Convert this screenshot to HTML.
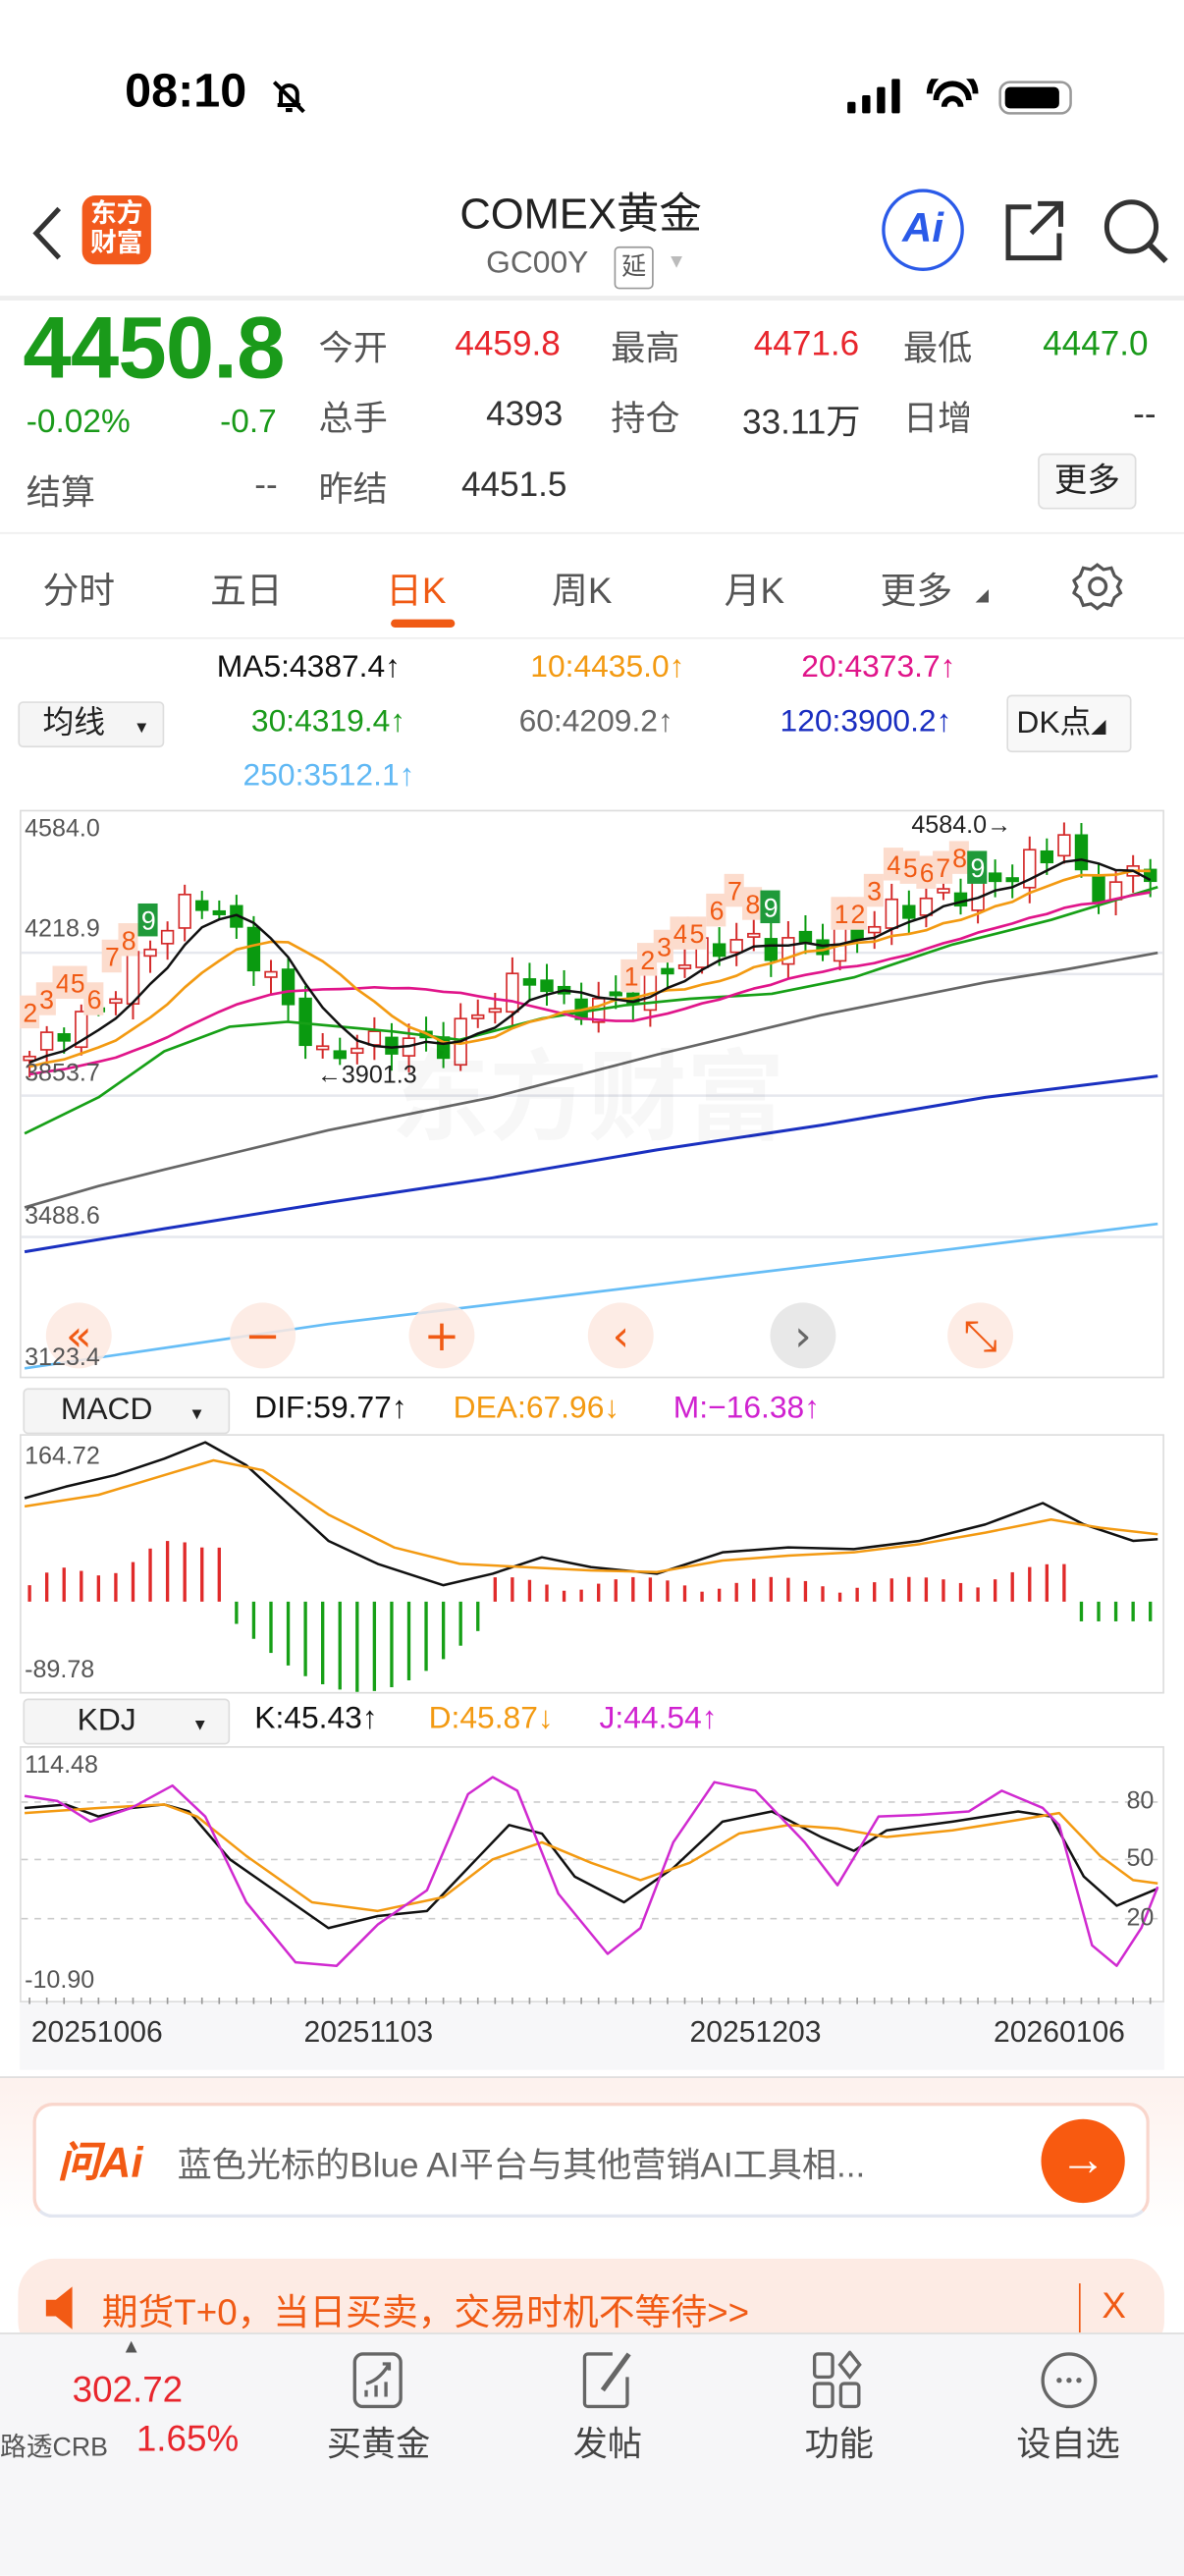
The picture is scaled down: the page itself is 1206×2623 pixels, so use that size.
<!DOCTYPE html>
<html><head><meta charset="utf-8">
<style>
*{margin:0;padding:0;box-sizing:border-box}
html,body{width:1206px;height:2622px;overflow:hidden;background:#fff}
#w{position:absolute;left:0;top:0;width:721px;height:1568px;transform:scale(1.67268);transform-origin:0 0;font-family:"Liberation Sans","Noto Sans CJK SC",sans-serif;color:#222}
.a{position:absolute;white-space:nowrap}
.g{color:#1a9a1a}.r{color:#e8262d}.gr{color:#555}
</style></head><body><div id="w">
<!-- status -->
<div class="a" style="left:76px;top:40px;font-size:29px;font-weight:bold;color:#000">08:10</div>
<svg class="a" style="left:163px;top:46px" width="26" height="26" viewBox="0 0 26 26"><path d="M6 18h14M8 18V11a5 5 0 0 1 10 0v7M11 21h4M4 4l18 18" stroke="#000" stroke-width="2.4" fill="none"/></svg>
<svg class="a" style="left:516px;top:48px" width="140" height="24"><rect x="0" y="14" width="5" height="7" rx="1"/><rect x="9" y="10" width="5" height="11" rx="1"/><rect x="18" y="5" width="5" height="16" rx="1"/><rect x="27" y="0" width="5" height="21" rx="1"/><path d="M50 9a14 14 0 0 1 28 0M54 13a9 9 0 0 1 20 0M59 17a4 4 0 0 1 10 0" stroke="#000" stroke-width="3.5" fill="none"/><rect x="93" y="2" width="43" height="19" rx="6" fill="none" stroke="#999" stroke-width="1.5"/><rect x="96" y="5" width="33" height="13" rx="3"/></svg>
<!-- header -->
<svg class="a" style="left:16px;top:124px" width="24" height="36"><path d="M20 3L6 18l14 15" stroke="#333" stroke-width="3" fill="none"/></svg>
<div class="a" style="left:50px;top:119px;width:42px;height:42px;background:#f25a1d;border-radius:8px;color:#fff;font-size:16px;font-weight:bold;line-height:18px;text-align:center;padding-top:3px">东方<br>财富</div>
<div class="a" style="left:280px;top:110px;font-size:26px;color:#222">COMEX黄金</div>
<div class="a" style="left:296px;top:150px;font-size:19px;color:#666">GC00Y</div>
<div class="a" style="left:374px;top:150px;width:24px;height:26px;border:1px solid #999;border-radius:3px;font-size:15px;color:#555;text-align:center;line-height:24px">延</div>
<div class="a" style="left:406px;top:152px;font-size:12px;color:#bbb">▼</div>
<div class="a" style="left:537px;top:115px;width:50px;height:50px;border:2.5px solid #2a5ae8;border-radius:50%;color:#2a5ae8;font-weight:bold;font-style:italic;font-size:25px;text-align:center;line-height:45px">Ai</div>
<svg class="a" style="left:610px;top:120px" width="40" height="40"><path d="M18 6H4v31h31V22M22 4h14v14M36 4L18 22" stroke="#333" stroke-width="3" fill="none"/></svg>
<svg class="a" style="left:670px;top:120px" width="44" height="44"><circle cx="19" cy="18" r="15" stroke="#333" stroke-width="3" fill="none"/><path d="M30 29l10 10" stroke="#333" stroke-width="3.5"/></svg>
<div class="a" style="left:0;top:180px;width:721px;height:3px;background:#eee"></div>
<!-- quote -->
<div class="a g" style="left:14px;top:182px;font-size:53px;font-weight:bold;letter-spacing:-0.5px">4450.8</div>
<div class="a g" style="left:16px;top:246px;font-size:20px">-0.02%</div>
<div class="a g" style="left:134px;top:246px;font-size:20px">-0.7</div>
<div class="a gr" style="left:16px;top:284px;font-size:21px">结算</div>
<div class="a gr" style="left:155px;top:284px;font-size:21px">--</div>
<div class="a gr" style="left:194px;top:196px;font-size:21px">今开</div>
<div class="a r" style="left:277px;top:198px;font-size:21px">4459.8</div>
<div class="a gr" style="left:372px;top:196px;font-size:21px">最高</div>
<div class="a r" style="left:459px;top:198px;font-size:21px">4471.6</div>
<div class="a gr" style="left:550px;top:196px;font-size:21px">最低</div>
<div class="a g" style="left:635px;top:198px;font-size:21px">4447.0</div>
<div class="a gr" style="left:194px;top:239px;font-size:21px">总手</div>
<div class="a" style="left:296px;top:241px;font-size:21px;color:#333">4393</div>
<div class="a gr" style="left:372px;top:239px;font-size:21px">持仓</div>
<div class="a" style="left:452px;top:241px;font-size:21px;color:#333">33.11万</div>
<div class="a gr" style="left:550px;top:239px;font-size:21px">日增</div>
<div class="a" style="left:690px;top:241px;font-size:21px;color:#333">--</div>
<div class="a gr" style="left:194px;top:282px;font-size:21px">昨结</div>
<div class="a" style="left:281px;top:284px;font-size:21px;color:#333">4451.5</div>
<div class="a" style="left:632px;top:276px;width:60px;height:34px;border:1px solid #ddd;border-radius:4px;background:#f7f7f7;font-size:20px;text-align:center;line-height:32px;color:#222">更多</div>
<div class="a" style="left:0;top:324px;width:721px;height:1px;background:#eee"></div>
<!-- tabs -->
<div class="a" style="left:26px;top:342px;font-size:22px;color:#555">分时</div>
<div class="a" style="left:128px;top:342px;font-size:22px;color:#555">五日</div>
<div class="a" style="left:235px;top:342px;font-size:22px;color:#f05a14">日K</div>
<div class="a" style="left:238px;top:377px;width:39px;height:5px;border-radius:3px;background:#f05a14"></div>
<div class="a" style="left:336px;top:342px;font-size:22px;color:#555">周K</div>
<div class="a" style="left:441px;top:342px;font-size:22px;color:#555">月K</div>
<div class="a" style="left:536px;top:342px;font-size:22px;color:#555">更多</div>
<div class="a" style="left:594px;top:358px;font-size:8px;color:#555">◢</div>
<svg class="a" style="left:653px;top:341px" width="32" height="32"><path d="M16 3l4 3 5-1 2 5 4 3-2 4 2 4-4 3-2 5-5-1-4 3-4-3-5 1-2-5-4-3 2-4-2-4 4-3 2-5 5 1z" stroke="#555" stroke-width="2" fill="none" transform="scale(.95)"/><circle cx="15.5" cy="16" r="5" stroke="#555" stroke-width="2" fill="none"/></svg>
<div class="a" style="left:0;top:388px;width:721px;height:1px;background:#eee"></div>
<!-- MA legend -->
<div class="a" style="left:132px;top:396px;font-size:19px;color:#111">MA5:4387.4↑</div>
<div class="a" style="left:323px;top:396px;font-size:19px;color:#f39a12">10:4435.0↑</div>
<div class="a" style="left:488px;top:396px;font-size:19px;color:#e0158a">20:4373.7↑</div>
<div class="a" style="left:153px;top:429px;font-size:19px;color:#1a9a1a">30:4319.4↑</div>
<div class="a" style="left:316px;top:429px;font-size:19px;color:#666">60:4209.2↑</div>
<div class="a" style="left:475px;top:429px;font-size:19px;color:#1a2ec0">120:3900.2↑</div>
<div class="a" style="left:148px;top:462px;font-size:19px;color:#60b8f4">250:3512.1↑</div>
<div class="a" style="left:11px;top:427px;width:89px;height:28px;border:1px solid #ddd;border-radius:3px;background:#f5f5f5;font-size:19px;padding-left:14px;line-height:26px">均线 <span style="font-size:10px;margin-left:12px">▼</span></div>
<div class="a" style="left:613px;top:423px;width:76px;height:35px;border:1px solid #ddd;border-radius:3px;background:#f8f8f8;font-size:19px;padding-left:5px;line-height:33px">DK点<span style="font-size:9px">◢</span></div>

<svg class="a" id="ch" style="left:0;top:0" width="721" height="1260"></svg>

<div class="a" style="left:15px;top:496px;font-size:15px;color:#555">4584.0</div>
<div class="a" style="left:15px;top:557px;font-size:15px;color:#555">4218.9</div>
<div class="a" style="left:15px;top:645px;font-size:15px;color:#555">3853.7</div>
<div class="a" style="left:15px;top:732px;font-size:15px;color:#555">3488.6</div>
<div class="a" style="left:15px;top:818px;font-size:15px;color:#555">3123.4</div>
<div class="a" style="left:555px;top:494px;font-size:15px;color:#222">4584.0→</div>
<div class="a" style="left:193px;top:646px;font-size:15px;color:#222">←3901.3</div>
<div class="a" style="left:238px;top:620px;font-size:60px;color:rgba(0,0,0,0.03);font-weight:bold">东方财富</div>

<!-- MACD header -->
<div class="a" style="left:14px;top:845px;width:126px;height:28px;border:1px solid #ddd;border-radius:3px;background:#f5f5f5;font-size:19px;padding-left:22px;line-height:26px">MACD<span style="font-size:10px;margin-left:22px">▼</span></div>
<div class="a" style="left:155px;top:847px;font-size:19px;color:#111">DIF:59.77↑</div>
<div class="a" style="left:276px;top:847px;font-size:19px;color:#f39a12">DEA:67.96↓</div>
<div class="a" style="left:410px;top:847px;font-size:19px;color:#d022d0">M:−16.38↑</div>
<div class="a" style="left:15px;top:878px;font-size:15px;color:#555">164.72</div>
<div class="a" style="left:15px;top:1008px;font-size:15px;color:#555">-89.78</div>
<!-- KDJ header -->
<div class="a" style="left:14px;top:1034px;width:126px;height:28px;border:1px solid #ddd;border-radius:3px;background:#f5f5f5;font-size:19px;padding-left:32px;line-height:26px">KDJ<span style="font-size:10px;margin-left:34px">▼</span></div>
<div class="a" style="left:155px;top:1036px;font-size:19px;color:#111">K:45.43↑</div>
<div class="a" style="left:261px;top:1036px;font-size:19px;color:#f39a12">D:45.87↓</div>
<div class="a" style="left:365px;top:1036px;font-size:19px;color:#d022d0">J:44.54↑</div>
<div class="a" style="left:15px;top:1066px;font-size:15px;color:#555">114.48</div>
<div class="a" style="left:15px;top:1197px;font-size:15px;color:#555">-10.90</div>
<div class="a" style="left:686px;top:1088px;font-size:15px;color:#555">80</div>
<div class="a" style="left:686px;top:1123px;font-size:15px;color:#555">50</div>
<div class="a" style="left:686px;top:1159px;font-size:15px;color:#555">20</div>
<div class="a" style="left:19px;top:1227px;font-size:18px;color:#333">20251006</div>
<div class="a" style="left:185px;top:1227px;font-size:18px;color:#333">20251103</div>
<div class="a" style="left:420px;top:1227px;font-size:18px;color:#333">20251203</div>
<div class="a" style="left:605px;top:1227px;font-size:18px;color:#333">20260106</div>

<!-- bottom ad area -->
<div class="a" style="left:0;top:1264px;width:721px;height:156px;background:linear-gradient(#fdf1ed,#fff 60%,#fff)"></div>
<div class="a" style="left:0;top:1264px;width:721px;height:1px;background:#ddd"></div>
<div class="a" style="left:20px;top:1280px;width:680px;height:70px;border:2px solid #f9d6cc;border-bottom-color:#e2e6f0;border-radius:12px;background:#fff"></div>
<div class="a" style="left:35px;top:1296px;font-size:26px;font-weight:bold;font-style:italic;color:#f25a14">问Ai</div>
<div class="a" style="left:108px;top:1302px;font-size:21px;color:#666">蓝色光标的Blue AI平台与其他营销AI工具相...</div>
<div class="a" style="left:634px;top:1290px;width:51px;height:51px;border-radius:50%;background:#f85a10;color:#fff;font-size:28px;text-align:center;line-height:49px;font-weight:bold">→</div>
<div class="a" style="left:11px;top:1375px;width:698px;height:60px;border-radius:22px;background:#fdebe4"></div>
<svg class="a" style="left:26px;top:1391px" width="30" height="28"><path d="M2 9h6l10-8v26l-10-8H2z" fill="#f25a14"/></svg>
<div class="a" style="left:62px;top:1390px;font-size:22px;color:#f05a14">期货T+0，当日买卖，交易时机不等待&gt;&gt;</div>
<div class="a" style="left:657px;top:1390px;width:1px;height:30px;background:#f05a14"></div>
<div class="a" style="left:671px;top:1391px;font-size:22px;color:#f05a14">X</div>
<!-- tabbar -->
<div class="a" style="left:0;top:1420px;width:721px;height:148px;background:#f6f6f8;border-top:1px solid #ddd"></div>
<div class="a" style="left:74px;top:1421px;font-size:12px;color:#555">▲</div>
<div class="a r" style="left:44px;top:1442px;font-size:22px">302.72</div>
<div class="a" style="left:0;top:1476px;font-size:16px;color:#555">路透CRB</div>
<div class="a r" style="left:83px;top:1472px;font-size:22px">1.65%</div>
<svg class="a" style="left:213px;top:1431px" width="36" height="36"><rect x="3" y="2" width="28" height="32" rx="5" stroke="#666" stroke-width="2" fill="none"/><path d="M10 28v-4M16 28v-7M22 28v-9M10 20q8-2 14-12M20 8h4v4" stroke="#666" stroke-width="2" fill="none"/></svg>
<div class="a" style="left:199px;top:1472px;font-size:21px;color:#444">买黄金</div>
<svg class="a" style="left:353px;top:1431px" width="36" height="36"><path d="M20 2H5a2 2 0 0 0-2 2v28a2 2 0 0 0 2 2h22a2 2 0 0 0 2-2V16" stroke="#666" stroke-width="2" fill="none"/><path d="M30 2L14 24" stroke="#666" stroke-width="3"/></svg>
<div class="a" style="left:349px;top:1472px;font-size:21px;color:#444">发帖</div>
<svg class="a" style="left:494px;top:1431px" width="36" height="36"><rect x="2" y="2" width="11" height="14" rx="2" stroke="#666" stroke-width="2" fill="none"/><rect x="2" y="20" width="11" height="14" rx="2" stroke="#666" stroke-width="2" fill="none"/><rect x="18" y="20" width="11" height="14" rx="2" stroke="#666" stroke-width="2" fill="none"/><path d="M23.5 1l6 7.5-6 7.5-6-7.5z" stroke="#666" stroke-width="2" fill="none"/></svg>
<div class="a" style="left:490px;top:1472px;font-size:21px;color:#444">功能</div>
<svg class="a" style="left:633px;top:1431px" width="36" height="36"><circle cx="18" cy="18" r="16" stroke="#666" stroke-width="2" fill="none"/><circle cx="12" cy="18" r="1.6" fill="#666"/><circle cx="18" cy="18" r="1.6" fill="#666"/><circle cx="24" cy="18" r="1.6" fill="#666"/></svg>
<div class="a" style="left:619px;top:1472px;font-size:21px;color:#444">设自选</div>
</div>
<script>
var s=document.getElementById('ch'),h='';
function Y(p){return 500+(4584-p)*0.2294}
function ln(pts,c,w){h+='<polyline points="'+pts.map(function(p){return p[0].toFixed(1)+','+p[1].toFixed(1)}).join(' ')+'" fill="none" stroke="'+c+'" stroke-width="'+(w||1.5)+'" stroke-linejoin="round"/>'}
h+='<rect x="12.5" y="493.5" width="696" height="345" fill="#fff" stroke="#ddd"/>';
[580,667,753].forEach(function(y){h+='<line x1="13" x2="708" y1="'+y+'" y2="'+y+'" stroke="#e6e8ee" stroke-width="1.5"/>'});
h+='<line x1="525" x2="708" y1="593" y2="593" stroke="#e6e8ee" stroke-width="1.5"/>';
h+='<rect x="12.5" y="873.5" width="696" height="157" fill="#fff" stroke="#ddd"/>';
h+='<rect x="12.5" y="1063.5" width="696" height="155" fill="#fff" stroke="#ddd"/>';
h+='<rect x="12" y="1219" width="697" height="45" fill="#f7f7f9"/>';
[1097,1132,1168].forEach(function(y){h+='<line x1="13" x2="708" y1="'+y+'" y2="'+y+'" stroke="#ccc" stroke-dasharray="4,4"/>'});
for(var i=0;i<66;i++){var x=18+i*10.5;h+='<line x1="'+x+'" x2="'+x+'" y1="1216" y2="1220" stroke="#999"/>'}
var K=[[18,3960],[40,4040],[60,4080],[80,4200],[100,4300],[120,4390],[135,4330],[150,4250],[175,4100],[195,3950],[215,3990],[240,4000],[270,3990],[290,4070],[310,4140],[325,4180],[340,4100],[360,4090],[380,4120],[400,4170],[420,4230],[450,4270],[470,4250],[500,4260],[520,4280],[540,4340],[570,4380],[600,4410],[620,4460],[640,4500],[650,4570],[660,4400],[680,4410],[695,4470],[705,4450]];
function I(x){for(var j=0;j<K.length-1;j++){if(x<=K[j+1][0]){var t=(x-K[j][0])/(K[j+1][0]-K[j][0]);return K[j][1]+t*(K[j+1][1]-K[j][1])}}return K[K.length-1][1]}
var cl=[],prev=3950;
for(var i=0;i<66;i++){var x=18+i*10.5,c=I(x)+Math.sin(i*2.3)*35,o=prev+Math.sin(i*1.7)*18;
 var hi=Math.max(o,c)+15+Math.abs(Math.sin(i*3.1))*30,lo=Math.min(o,c)-15-Math.abs(Math.cos(i*2.7))*30;
 var up=c>=o,col=up?'#d42b2b':'#0a9a10';
 h+='<line x1="'+x+'" x2="'+x+'" y1="'+Y(hi)+'" y2="'+Y(lo)+'" stroke="'+col+'" stroke-width="1.2"/>';
 var yt=Y(Math.max(o,c)),hh=Math.max(2,Y(Math.min(o,c))-yt);
 h+='<rect x="'+(x-3.5)+'" y="'+yt+'" width="7" height="'+hh+'" fill="'+(up?'#fff':col)+'" stroke="'+col+'"/>';
 cl.push([x,c]);prev=c;}
function ma(n){var r=[];for(var i=0;i<cl.length;i++){var sm=0;for(var k=0;k<n;k++){var j=i-k;sm+=j>=0?cl[j][1]:3950-(k-i)*4}r.push([cl[i][0],Y(sm/n)])}return r}
ln([[15,833],[200,806],[400,782],[550,764],[705,745]],'#66bdf6',1.6);
ln([[15,762],[100,748],[200,732],[300,717],[400,700],[500,685],[600,668],[705,655]],'#1a30c0',1.8);
ln([[15,735],[60,722],[100,712],[150,700],[200,688],[300,668],[400,642],[500,618],[560,606],[600,598],[650,590],[705,580]],'#666',1.6);
ln([[15,690],[60,668],[100,640],[140,625],[175,622],[240,628],[280,633],[330,620],[380,612],[420,608],[470,605],[520,595],[580,575],[640,560],[705,540]],'#17a017',1.6);
ln(ma(20),'#e0158a',1.6);ln(ma(10),'#f39a12',1.6);ln(ma(5),'#111',1.5);
function lb(x,y,t,g){h+='<rect x="'+(x-2)+'" y="'+(y-16)+'" width="12" height="20" fill="'+(g?'#1f9a3a':'#fcdccd')+'"/><text x="'+x+'" y="'+y+'" font-size="16" fill="'+(g?'#fff':'#f05a14')+'" font-family="Liberation Sans">'+t+'</text>'}
[[14,622,'2'],[24,614,'3'],[34,604,'4'],[43,604,'5'],[53,614,'6'],[64,588,'7'],[74,578,'8'],[86,566,'9',1],[380,600,'1'],[390,590,'2'],[400,582,'3'],[410,574,'4'],[420,574,'5'],[432,560,'6'],[443,548,'7'],[454,556,'8'],[465,558,'9',1],[508,562,'1'],[518,562,'2'],[528,548,'3'],[540,532,'4'],[550,534,'5'],[560,537,'6'],[570,534,'7'],[580,528,'8'],[591,534,'9',1]].forEach(function(a){lb(a[0],a[1],a[2],a[3])});
[['48','#fde9e1','«'],['160','#fde9e1','−'],['269','#fde9e1','+'],['378','#fde9e1','‹'],['489','#e4e4e4','›'],['597','#fde9e1','⤡']].forEach(function(b){h+='<circle cx="'+b[0]+'" cy="813" r="20" fill="'+b[1]+'" opacity=".85"/><text x="'+b[0]+'" y="822" text-anchor="middle" font-size="26" fill="'+(b[1]=='#e4e4e4'?'#666':'#f05a14')+'" font-family="DejaVu Sans">'+b[2]+'</text>'});
var z=975;
for(var i=0;i<66;i++){var x=18+i*10.5,v;
 if(x<140)v=-(10+(x-18)*0.25+Math.sin(i)*6);else if(x<300)v=10+Math.sin((x-140)/160*Math.PI)*45;else if(x<650)v=-(5+Math.abs(Math.sin(i*0.4))*10+(x>560?(x-560)*0.1:0));else v=12;
 h+='<line x1="'+x+'" x2="'+x+'" y1="'+z+'" y2="'+(z+v)+'" stroke="'+(v<0?'#e02a2a':'#17a017')+'" stroke-width="2"/>';}
ln([[15,912],[40,905],[70,898],[100,888],[125,878],[150,892],[175,915],[200,938],[230,952],[270,965],[300,958],[330,948],[360,954],[400,958],[440,945],[480,942],[520,943],[560,938],[600,928],[635,915],[660,928],[690,938],[705,937]],'#111',1.5);
ln([[15,917],[60,910],[100,898],[130,889],[160,895],[200,922],[240,942],[280,952],[320,954],[360,956],[400,957],[440,950],[480,947],[520,945],[560,940],[600,933],[640,925],[670,930],[705,934]],'#f39a12',1.5);
function KY(v){return 1075+(114.48-v)*1.0448}
function kl(a,c){ln(a.map(function(p){return [p[0],KY(p[1])]}),c,1.5)}
kl([[15,90],[40,92],[60,85],[80,90],[100,92],[115,88],[140,60],[170,40],[200,20],[230,27],[260,30],[290,60],[310,80],[330,75],[350,50],[380,35],[410,55],[440,82],[470,88],[500,73],[520,65],[540,77],[580,82],[620,88],[640,85],[660,50],[680,33],[705,43]],'#111');
kl([[15,87],[60,90],[100,92],[120,85],[150,62],[190,35],[230,30],[270,38],[300,60],[330,70],[360,58],[390,48],[420,58],[450,75],[480,80],[510,78],[540,73],[580,77],[620,83],[645,87],[670,62],[690,48],[705,46]],'#f39a12');
kl([[15,97],[35,94],[55,82],[80,90],[105,103],[125,85],[150,35],[180,0],[205,-2],[230,22],[260,42],[285,98],[300,108],[315,100],[340,40],[370,5],[390,20],[410,70],[435,105],[460,100],[490,70],[510,45],[535,85],[560,86],[590,88],[610,100],[635,90],[645,80],[665,10],[680,-2],[695,20],[705,44]],'#d02ad0');
s.innerHTML=h;
</script>
</body></html>
